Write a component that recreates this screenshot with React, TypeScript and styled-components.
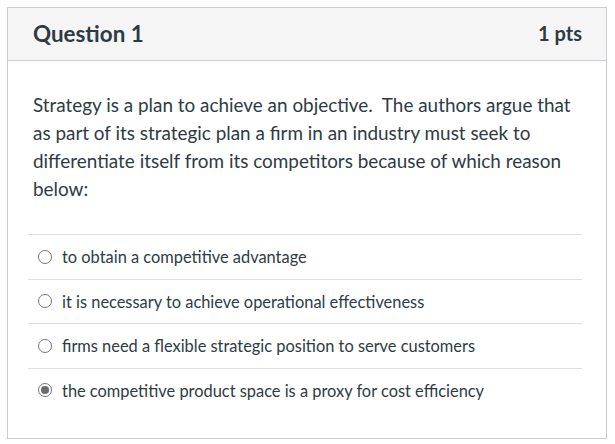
import React from 'react'
import styled, { createGlobalStyle } from 'styled-components'

const GlobalStyle = createGlobalStyle`
  html, body {
    margin: 0;
    padding: 0;
    background: #ffffff;
  }
  body {
    font-family: Lato, "Liberation Sans", sans-serif;
    color: #2d3b45;
  }
`

const Page = styled.div`
  padding: 7px 8px 6px 7px;
`

const Card = styled.div`
  border: 1px solid #c7cdd1;
  background: #fff;
`

const Header = styled.div`
  display: flex;
  align-items: center;
  justify-content: space-between;
  height: 53px;
  padding: 0 24px 2px 25px;
  box-sizing: border-box;
  background: #f5f5f5;
  border-bottom: 1px solid #c7cdd1;
`

const Title = styled.div`
  font-size: 22.4px;
  font-weight: 700;
`

const Points = styled.div`
  font-size: 20px;
  font-weight: 700;
`

const Body = styled.div`
  padding: 30px 24px 26px 20px;
`

const Prompt = styled.p`
  margin: 0 0 31px 5px;
  font-size: 18.9px;
  line-height: 28px;
  white-space: pre-wrap;
`

const Answers = styled.div`
  display: flex;
  flex-direction: column;
`

const Answer = styled.label`
  display: flex;
  align-items: center;
  gap: 10px;
  height: 44.5px;
  padding: 0 10px;
  box-sizing: border-box;
  border-top: 1px solid #dadfe3;
  font-size: 16.4px;
`

const Radio = styled.span<{ $checked?: boolean }>`
  box-sizing: border-box;
  width: 14px;
  height: 14px;
  border-radius: 50%;
  border: 1px solid #767676;
  display: flex;
  align-items: center;
  justify-content: center;
  flex-shrink: 0;
  &::after {
    content: '';
    width: 8px;
    height: 8px;
    border-radius: 50%;
    background: ${(p) => (p.$checked ? '#6b6b6b' : 'transparent')};
  }
`

const answers = [
  'to obtain a competitive advantage',
  'it is necessary to achieve operational effectiveness',
  'firms need a flexible strategic position to serve customers',
  'the competitive product space is a proxy for cost efficiency',
]

function App() {
  const selected = 3
  return (
    <Page>
      <GlobalStyle />
      <Card>
        <Header>
          <Title>Question 1</Title>
          <Points>1 pts</Points>
        </Header>
        <Body>
          <Prompt>
            {'Strategy is a plan to achieve an objective.  The authors argue that as part of its strategic plan a firm in an industry must seek to differentiate itself from its competitors because of which reason below:'}
          </Prompt>
          <Answers>
            {answers.map((a, i) => (
              <Answer key={i}>
                <Radio $checked={i === selected} />
                {a}
              </Answer>
            ))}
          </Answers>
        </Body>
      </Card>
    </Page>
  )
}

export default App
